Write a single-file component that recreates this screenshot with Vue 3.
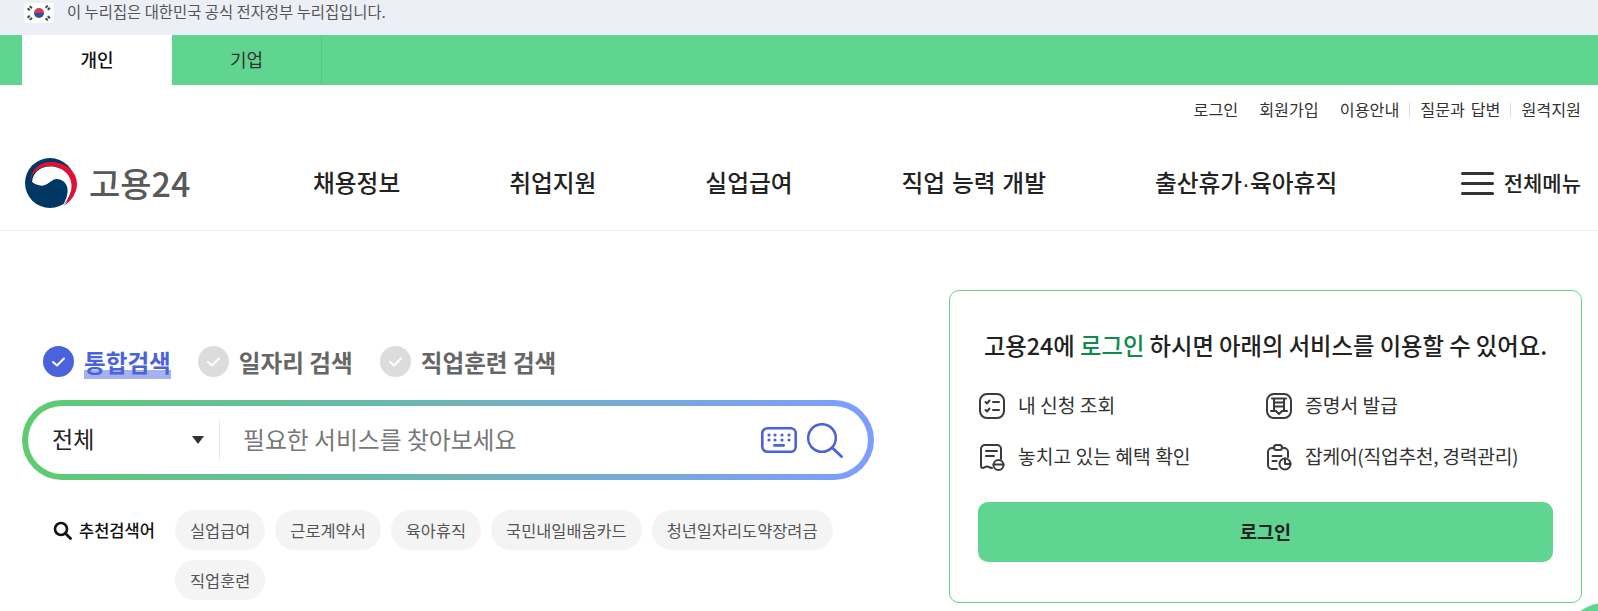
<template>
  <div class="page">
    <div class="gov-bar">
      <svg class="flag" width="30" height="20" viewBox="0 0 30 20">
        <rect width="30" height="20" fill="#fff" />
        <path d="M10 10a5 5 0 0 1 10 0z" fill="#d33a4c" />
        <path d="M10 10a5 5 0 0 0 10 0z" fill="#2f4f9a" />
        <g stroke="#444" stroke-width="3" stroke-dasharray="2 1">
          <path d="M4 7l4-4" />
          <path d="M22 3l4 4" />
          <path d="M4 13l4 4" />
          <path d="M22 17l4-4" />
        </g>
      </svg>
      <span>이 누리집은 대한민국 공식 전자정부 누리집입니다.</span>
    </div>

    <div class="user-tabs">
      <a class="user-tab active">개인</a>
      <a class="user-tab">기업</a>
    </div>

    <header class="header">
      <nav class="util">
        <a v-for="u in utilLinks" :key="u.label" :class="{ sep: u.sep }">{{ u.label }}</a>
      </nav>
      <div class="main-row">
        <div class="logo">
          <svg width="54" height="54" viewBox="0 0 54 54">
            <circle cx="26" cy="27" r="25" fill="#003764" />
            <path d="M6 25C7 13 16 6 27 6c14 0 26 9 26 22 0 9-6 18-14 22 7-6 9-14 8-22C45 17 36 10 26 10 16 10 8 16 6 25z" fill="#e60f33" />
            <path d="M8 26C9 16 17 10.500 26 10.500c11 0 21 7 21.500 18.500 .5 7-3.500 15-8.500 20.500 3-6 6-13 4-19-2-6-9-9-14-6.500-4 2.500-8 6.500-13 5.500-4-1-6.500-2-7.500-3.500z" fill="#fff" />
          </svg>
          <span class="logo-text">고용24</span>
        </div>
        <nav class="gnb">
          <a>채용정보</a>
          <a>취업지원</a>
          <a>실업급여</a>
          <a class="wide">직업 능력 개발</a>
          <a>출산휴가<span class="middot">·</span>육아휴직</a>
        </nav>
        <button class="all-menu">
          <span class="burger"><i></i><i></i><i></i></span>
          전체메뉴
        </button>
      </div>
    </header>

    <main class="content">
      <section class="search-col">
        <div class="scope">
          <label v-for="(s, i) in scopes" :key="s" class="scope-item" :class="{ on: i === 0 }">
            <svg width="31" height="31" viewBox="0 0 31 31">
              <circle cx="15.500" cy="15.500" r="15.500" class="dot" />
              <path d="M10 16l4 3.500 7-7" fill="none" stroke="#fff" stroke-width="2" stroke-linecap="round" stroke-linejoin="round" />
            </svg>
            <span>{{ s }}</span>
          </label>
        </div>

        <div class="search-box">
          <div class="search-inner">
            <div class="select">
              <span class="select-label">전체</span>
              <i class="caret"></i>
            </div>
            <span class="placeholder">필요한 서비스를 찾아보세요</span>
            <svg class="kbd" width="36" height="26" viewBox="0 0 36 26">
              <rect x="1.300" y="1.300" width="33.400" height="23.400" rx="5" fill="none" stroke="#4a63dc" stroke-width="2.600" />
              <g fill="#4a63dc">
                <circle v-for="x in [8, 14, 21, 28]" :key="'a' + x" :cx="x" cy="8" r="1.600" />
                <circle v-for="x in [8, 14, 21, 28]" :key="'b' + x" :cx="x" cy="13" r="1.600" />
                <rect x="12" y="17" width="12" height="2.800" rx="1.400" />
              </g>
            </svg>
            <svg class="glass" width="36" height="35" viewBox="0 0 36 35">
              <circle cx="15" cy="15" r="13.800" fill="none" stroke="#4a63dc" stroke-width="2.500" />
              <path d="M25.500 25l9 8.500" stroke="#4a63dc" stroke-width="2.800" stroke-linecap="round" />
            </svg>
          </div>
        </div>

        <div class="keywords">
          <div class="kw-title">
            <svg width="19" height="19" viewBox="0 0 19 19">
              <circle cx="8" cy="8" r="6" fill="none" stroke="#111" stroke-width="2.600" />
              <path d="M12.500 12.500l5 5" stroke="#111" stroke-width="2.800" stroke-linecap="round" />
            </svg>
            추천검색어
          </div>
          <div class="kw-list">
            <a v-for="k in keywords" :key="k" class="chip">{{ k }}</a>
          </div>
        </div>
      </section>

      <aside class="login-card">
        <h2>고용24에 <em>로그인</em> 하시면 아래의 서비스를 이용할 수 있어요.</h2>
        <ul class="services">
          <li>
            <svg width="28" height="28" viewBox="0 0 28 28" class="svc">
              <rect x="2" y="2" width="24" height="24" rx="7" />
              <path d="M7.500 10l1.500 1.500 2.500-3M7.500 18l1.500 1.500 2.500-3M15 10h6M15 18h6" />
            </svg>
            <span>내 신청 조회</span>
          </li>
          <li>
            <svg width="28" height="28" viewBox="0 0 28 28" class="svc">
              <rect x="2" y="2" width="24" height="24" rx="7" />
              <path d="M7 6.500h14M9 6.500V19M19 6.500V19M6 19h5l3 3 3-3h5M9 10.500h10M9 14.500h10" />
            </svg>
            <span>증명서 발급</span>
          </li>
          <li>
            <svg width="28" height="28" viewBox="0 0 28 28" class="svc">
              <path d="M14 25c-2 0-3-1.500-5-1.500S6 25 5 25s-2-.5-2-2V6a4 4 0 0 1 4-4h12a4 4 0 0 1 4 4v10" />
              <path d="M8 8h11M8 13h8" />
              <circle cx="20.500" cy="22" r="5" />
              <path d="M15.500 21.500h10" />
            </svg>
            <span>놓치고 있는 혜택 확인</span>
          </li>
          <li>
            <svg width="28" height="28" viewBox="0 0 28 28" class="svc">
              <path d="M12 26H7a4 4 0 0 1-4-4V9a4 4 0 0 1 4-4h2M17 5h2a4 4 0 0 1 4 4v5" />
              <rect x="9" y="2" width="8" height="5" rx="2.500" />
              <path d="M7.500 13h9M7.500 18h4" />
              <circle cx="20" cy="21" r="5.500" />
              <path d="M20 15.500V21h5.500" />
            </svg>
            <span class="tight">잡케어(직업추천, 경력관리)</span>
          </li>
        </ul>
        <button class="login-btn">로그인</button>
      </aside>
    </main>

    <div class="corner-blob"></div>
  </div>
</template>

<script setup>
const utilLinks = [
  { label: '로그인' },
  { label: '회원가입' },
  { label: '이용안내' },
  { label: '질문과 답변', sep: true },
  { label: '원격지원', sep: true },
]
const scopes = ['통합검색', '일자리 검색', '직업훈련 검색']
const keywords = ['실업급여', '근로계약서', '육아휴직', '국민내일배움카드', '청년일자리도약장려금', '직업훈련']
</script>

<style>
html, body {
  margin: 0;
  background: #fff;
  overflow: hidden;
}
</style>

<style scoped>
.page {
  position: relative;
  width: 1598px;
  height: 611px;
  overflow: hidden;
  font-family: "Noto Sans CJK KR", "Noto Sans", sans-serif;
  color: #222;
}
a { color: inherit; text-decoration: none; }

.gov-bar {
  height: 35px;
  box-sizing: border-box;
  padding: 0 0 10px 24px;
  background: #eceff5;
  display: flex;
  align-items: center;
  gap: 13px;
  font-size: 15.400px;
  line-height: 20px;
  color: #555;
}
.gov-bar span { padding-bottom: 4px; }

.user-tabs {
  height: 50px;
  background: #60d491;
  padding-left: 22px;
  display: flex;
}
.user-tab {
  width: 150px;
  box-sizing: border-box;
  padding-bottom: 3px;
  display: flex;
  align-items: center;
  justify-content: center;
  font-size: 18px;
  color: #333;
  border-right: 1px solid #55c585;
}
.user-tab.active {
  background: #fff;
  color: #111;
  font-weight: 500;
  border-right: 0;
}

.header {
  height: 145px;
  border-bottom: 1px solid #eee;
  padding: 0 17px 0 24px;
}
.util {
  display: flex;
  justify-content: flex-end;
  gap: 21px;
  padding-top: 14px;
  font-size: 16.200px;
  line-height: 20px;
  word-spacing: 2px;
  color: #333;
}
.util a.sep { position: relative; }
.util a.sep::before {
  content: '';
  position: absolute;
  left: -11px;
  top: 4px;
  width: 1px;
  height: 14px;
  background: #ddd;
}
.main-row {
  display: flex;
  align-items: center;
  margin-top: 37px;
  height: 54px;
}
.logo {
  display: flex;
  align-items: center;
  gap: 11px;
  width: 289px;
  flex: none;
}
.logo-text {
  font-size: 34px;
  line-height: 54px;
  color: #595959;
  font-weight: 500;
}
.gnb {
  display: flex;
  gap: 109px;
  padding-bottom: 2px;
  font-size: 23.700px;
  font-weight: 500;
  color: #222;
  flex: 1;
}
.gnb .wide { word-spacing: 1.500px; }
.middot { font-family: "Liberation Sans", sans-serif; }
.all-menu {
  display: flex;
  align-items: center;
  gap: 10px;
  border: 0;
  background: none;
  padding: 0 0 2px;
  font: inherit;
  font-size: 21px;
  font-weight: 500;
  color: #222;
}
.burger {
  display: flex;
  flex-direction: column;
  gap: 7px;
  width: 33px;
  padding-top: 3px;
}
.burger i {
  display: block;
  height: 3px;
  background: #333;
  border-radius: 2px;
}

.content {
  display: flex;
  justify-content: space-between;
  padding: 59px 16px 0 22px;
}
.search-col { width: 852px; padding-top: 56px; }
.scope {
  display: flex;
  gap: 27px;
  padding-left: 21px;
  height: 31px;
}
.scope-item {
  display: flex;
  align-items: center;
  gap: 10px;
  font-size: 23.600px;
  font-weight: 700;
  color: #666;
}
.dot { fill: #dcdcdc; }
.scope-item.on .dot { fill: #4a63dc; }
.scope-item.on span {
  color: #4a63dc;
  line-height: 34px;
  background: linear-gradient(transparent 25px, #a6b2ef 25px);
}
.search-box {
  margin-top: 23px;
  height: 80px;
  padding: 6px;
  border-radius: 40px;
  background: linear-gradient(90deg, #5ecb70, #7d9dff);
  box-sizing: border-box;
}
.search-inner {
  height: 68px;
  background: #fff;
  border-radius: 34px;
  display: flex;
  align-items: center;
  padding: 0 25px 0 24px;
}
.select {
  display: flex;
  align-items: center;
  justify-content: space-between;
  padding-right: 15px;
  height: 38px;
  box-sizing: border-box;
  border-right: 1px solid #e6e6e6;
  width: 168px;
  font-size: 23px;
  color: #222;
  flex: none;
}
.select-label { padding-bottom: 4px; }
.caret {
  width: 0;
  height: 0;
  border-left: 6px solid transparent;
  border-right: 6px solid transparent;
  border-top: 8px solid #333;
}
.placeholder {
  flex: 1;
  margin-left: 23px;
  padding-bottom: 4px;
  font-size: 23.800px;
  color: #777;
}
.kbd { margin-right: 10px; }
.keywords {
  display: flex;
  margin-top: 30px;
  padding-left: 31px;
}
.kw-title {
  display: flex;
  align-items: center;
  gap: 7px;
  width: 122px;
  height: 40px;
  flex: none;
  font-size: 16.500px;
  font-weight: 500;
  color: #111;
}
.kw-list {
  display: flex;
  flex-wrap: wrap;
  gap: 10px;
}
.chip {
  height: 40px;
  line-height: 40px;
  padding: 0 15px;
  border-radius: 20px;
  background: #f4f4f4;
  font-size: 16.400px;
  color: #555;
}

.login-card {
  width: 633px;
  height: 313px;
  box-sizing: border-box;
  border: 1px solid #60d491;
  border-radius: 10px;
  padding: 39px 28px 0;
}
.login-card h2 {
  margin: 0;
  text-align: center;
  font-size: 23.300px;
  font-weight: 500;
  line-height: 30px;
  color: #222;
}
.login-card em {
  font-style: normal;
  color: #0f8a4d;
}
.services {
  list-style: none;
  margin: 31px 0 0;
  padding: 0;
  display: grid;
  grid-template-columns: 287px 1fr;
  row-gap: 21px;
}
.services li {
  display: flex;
  align-items: center;
  gap: 12px;
  height: 30px;
  font-size: 19.300px;
  color: #333;
}
.services li span { padding-bottom: 2px; }
.services li .tight { letter-spacing: -0.300px; }
.svc {
  fill: none;
  stroke: #3a3a3a;
  stroke-width: 2;
  stroke-linecap: round;
  stroke-linejoin: round;
  flex: none;
}
.login-btn {
  display: block;
  width: 100%;
  height: 60px;
  margin-top: 30px;
  padding: 0 0 3px;
  border: 0;
  border-radius: 10px;
  background: #60d491;
  font: inherit;
  font-size: 18.500px;
  font-weight: 700;
  color: #222;
}
.corner-blob {
  position: absolute;
  left: 1563px;
  top: 603px;
  width: 84px;
  height: 84px;
  border-radius: 50%;
  background: #60d491;
}
</style>
